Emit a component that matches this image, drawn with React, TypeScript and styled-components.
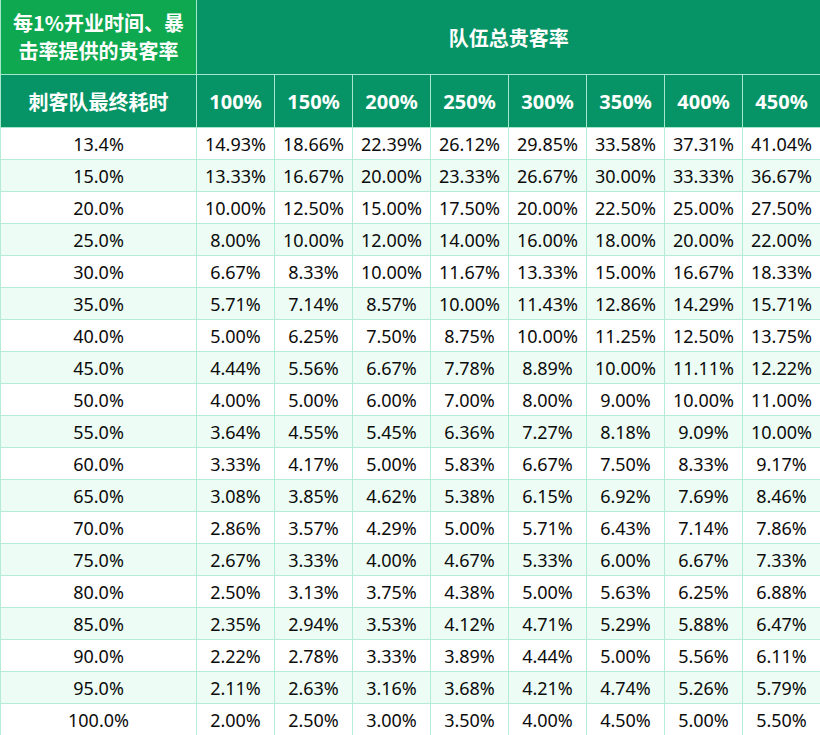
import React from "react";
import styled, { createGlobalStyle } from "styled-components";

const GlobalStyle = createGlobalStyle`
  html, body { margin: 0; padding: 0; background: #ffffff; }
  body { font-family: "Noto Sans", "Noto Sans CJK SC", sans-serif; }
`;

const Table = styled.table`
  border-collapse: collapse;
  table-layout: fixed;
  width: 820px;
  border-left: 1px solid #c8cfcc;
  font-family: "Noto Sans", "Noto Sans CJK SC", sans-serif;
`;

const Corner = styled.th`
  height: 72px;
  background: #0ea850;
  color: #ffffff;
  font-weight: 700;
  font-size: 20px;
  line-height: 28px;
  padding: 0;
  border: 1px solid #a6e6cc;
  border-top: none;
  text-align: center;
  white-space: nowrap;
  font-family: "Noto Sans CJK SC", sans-serif;
`;

const GroupHead = styled.th`
  height: 72px;
  background: #069466;
  color: #ffffff;
  font-weight: 700;
  font-size: 20px;
  border: 1px solid #a6e6cc;
  border-top: none;
  border-right: none;
  text-align: center;
  font-family: "Noto Sans CJK SC", sans-serif;
`;

const ColHead = styled.th<{ $first?: boolean }>`
  height: 52px;
  background: #069466;
  color: #ffffff;
  font-weight: 700;
  font-size: 20px;
  border: 1px solid #a6e6cc;
  text-align: center;
  padding: 0;
  font-family: ${(p) => (p.$first ? '"Noto Sans CJK SC", sans-serif' : '"Noto Sans", sans-serif')};
`;

const Row = styled.tr<{ $alt: boolean }>`
  background: ${(p) => (p.$alt ? "#edfcf4" : "#ffffff")};
`;

const Cell = styled.td`
  height: 31px;
  padding: 0;
  border: 1px solid #b4ecd6;
  text-align: center;
  font-size: 18px;
  color: #0c0c0c;
  white-space: nowrap;
  &:last-child { border-right: 1px solid #c8eee0; }
`;

const rates = [100, 150, 200, 250, 300, 350, 400, 450];
const times = [13.4, 15, 20, 25, 30, 35, 40, 45, 50, 55, 60, 65, 70, 75, 80, 85, 90, 95, 100];

const fmt = (r: number, t: number) => {
  const v = Math.round(((r + 100) * 100) / t) / 100;
  return v.toFixed(2) + "%";
};

export default function App() {
  return (
    <>
      <GlobalStyle />
      <Table>
        <colgroup>
          <col style={{ width: 196 }} />
          {rates.map((r) => (
            <col key={r} style={{ width: 78 }} />
          ))}
        </colgroup>
        <thead>
          <tr>
            <Corner>
              每1%开业时间、暴
              <br />
              击率提供的贵客率
            </Corner>
            <GroupHead colSpan={8}>队伍总贵客率</GroupHead>
          </tr>
          <tr>
            <ColHead $first>刺客队最终耗时</ColHead>
            {rates.map((r) => (
              <ColHead key={r}>{r}%</ColHead>
            ))}
          </tr>
        </thead>
        <tbody>
          {times.map((t, i) => (
            <Row key={t} $alt={i % 2 === 1}>
              <Cell>{t.toFixed(1)}%</Cell>
              {rates.map((r) => (
                <Cell key={r}>{fmt(r, t)}</Cell>
              ))}
            </Row>
          ))}
        </tbody>
      </Table>
    </>
  );
}
